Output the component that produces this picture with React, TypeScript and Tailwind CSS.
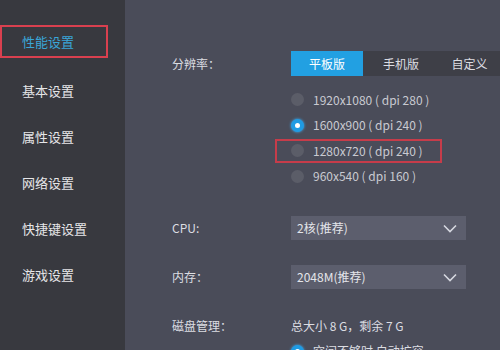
import React from "react";

const font = { fontFamily: '"Noto Sans CJK SC", "Noto Sans", sans-serif' };

const menu = ["性能设置", "基本设置", "属性设置", "网络设置", "快捷键设置", "游戏设置"];

const resolutions = [
  { label: "1920x1080 ( dpi 280 )", checked: false },
  { label: "1600x900 ( dpi 240 )", checked: true },
  { label: "1280x720 ( dpi 240 )", checked: false, marked: true },
  { label: "960x540 ( dpi 160 )", checked: false },
];

function Radio({ checked }: { checked: boolean }) {
  return checked ? (
    <span className="flex h-[13px] w-[13px] shrink-0 items-center justify-center rounded-full bg-[#1f9be3] shadow-[0_0_3px_#3fb4ff]">
      <span className="block h-[5px] w-[5px] rounded-full bg-white" />
    </span>
  ) : (
    <span className="block h-[13px] w-[13px] shrink-0 rounded-full bg-[#5b5d68]" />
  );
}

function Chevron() {
  return (
    <svg width="14" height="9" viewBox="0 0 14 9" fill="none">
      <path d="M1 1.5 L7 7.5 L13 1.5" stroke="#d6d8e0" strokeWidth="1.6" />
    </svg>
  );
}

function Select({ value }: { value: string }) {
  return (
    <div className="flex h-[24px] w-[175px] items-center justify-between bg-[#5c5e6d] pl-[6px] pr-[9px] text-[12px] text-[#e4e5ea]">
      <span>{value}</span>
      <Chevron />
    </div>
  );
}

export default function App() {
  return (
    <div style={font} className="flex h-[350px] w-[500px] overflow-hidden bg-[#4a4c59]">
      {/* Sidebar */}
      <div className="flex w-[125px] shrink-0 flex-col bg-[#38393f] pt-[22px]">
        {menu.map((item, i) => (
          <div
            key={item}
            className={`relative flex items-center pl-[22px] text-[13px] ${i === 0 ? "h-[49px]" : "h-[46px]"}`}
          >
            {i === 0 && (
              <div className="absolute left-0 top-[3px] h-[33px] w-[108px] border-2 border-[#d9404f]" />
            )}
            <span className={i === 0 ? "-mt-[9px] text-[#3aa6d8]" : "-mt-[6px] text-[#e6e6e8]"}>{item}</span>
          </div>
        ))}
      </div>

      {/* Main */}
      <div className="flex flex-1 flex-col">
        <div className="h-[10px] bg-[#3c3d43]" />
        <div className="flex flex-col pl-[47px] pt-[51px] text-[12px] text-[#dcdde2]">
          <div className="flex items-center">
            <span className="w-[119px]">分辨率：</span>
            <div className="flex h-[25px] flex-1 items-center bg-[#3e3f47] text-[12px]">
              <span className="flex h-full w-[72px] items-center justify-center bg-[#22a0e2] text-white">平板版</span>
              <span className="w-[76px] text-center">手机版</span>
              <span className="flex-1 text-center">自定义</span>
            </div>
          </div>

          <div className="ml-[119px] mt-[11px] flex flex-col">
            {resolutions.map((r) => (
              <div key={r.label} className="relative flex h-[25.5px] items-center gap-[9px] text-[12px] text-[#c9cad1]">
                {r.marked && (
                  <div className="absolute left-[-16px] top-[1px] h-[24px] w-[167px] border-2 border-[#c63c4a]" />
                )}
                <Radio checked={r.checked} />
                <span>{r.label}</span>
              </div>
            ))}
          </div>

          <div className="mt-[27px] flex items-center">
            <span className="w-[119px]">CPU:</span>
            <Select value="2核(推荐)" />
          </div>

          <div className="mt-[25px] flex items-center">
            <span className="w-[119px]">内存：</span>
            <Select value="2048M(推荐)" />
          </div>

          <div className="mt-[28px] flex items-center">
            <span className="w-[119px]">磁盘管理：</span>
            <span>总大小 8 G，剩余 7 G</span>
          </div>

          <div className="ml-[119px] mt-[7px] flex items-center gap-[9px]">
            <Radio checked />
            <span>空间不够时 自动扩容</span>
          </div>
        </div>
      </div>
    </div>
  );
}
